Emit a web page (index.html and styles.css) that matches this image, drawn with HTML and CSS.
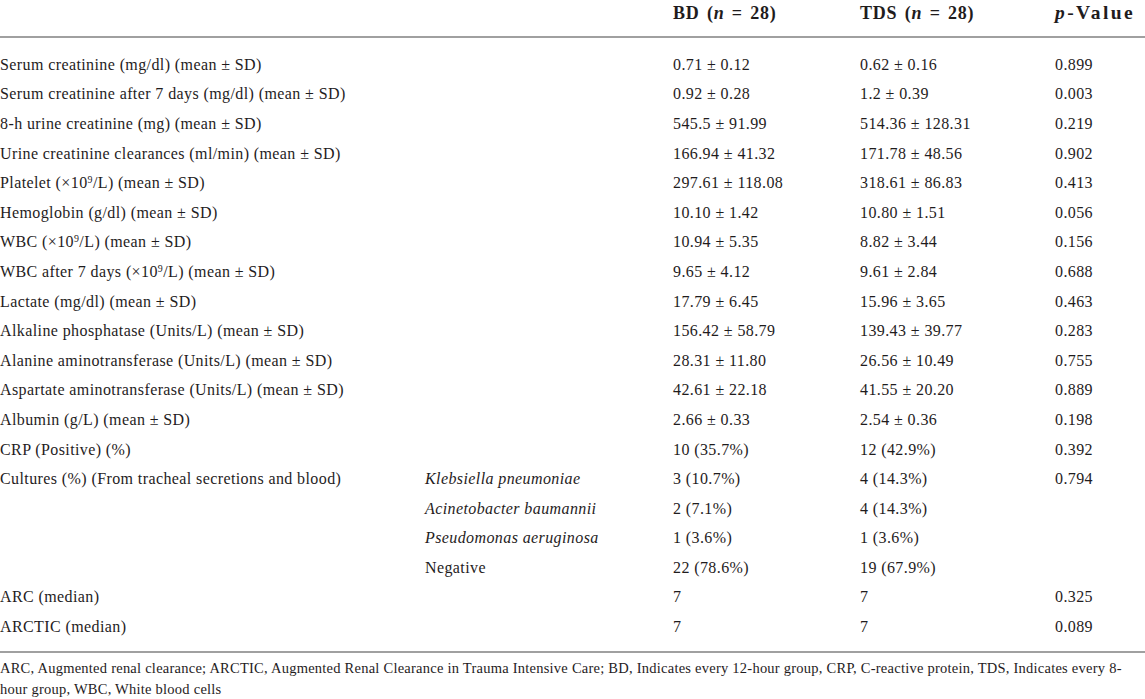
FILE: index.html
```html
<!DOCTYPE html>
<html>
<head>
<meta charset="utf-8">
<link rel="stylesheet" href="styles.css">
</head>
<body>
<div class="page">
<table class="data">
  <colgroup>
    <col class="c1"><col class="c2"><col class="c3"><col class="c4"><col class="c5">
  </colgroup>
  <thead>
    <tr>
      <th></th><th></th>
      <th>BD (<i>n</i> = 28)</th>
      <th>TDS (<i>n</i> = 28)</th>
      <th class="pval"><i>p</i>-Value</th>
    </tr>
  </thead>
  <tbody>
    <tr class="first"><td>Serum creatinine (mg/dl) (mean ± SD)</td><td></td><td>0.71 ± 0.12</td><td>0.62 ± 0.16</td><td>0.899</td></tr>
    <tr><td>Serum creatinine after 7 days (mg/dl) (mean ± SD)</td><td></td><td>0.92 ± 0.28</td><td>1.2 ± 0.39</td><td>0.003</td></tr>
    <tr><td>8-h urine creatinine (mg) (mean ± SD)</td><td></td><td>545.5 ± 91.99</td><td>514.36 ± 128.31</td><td>0.219</td></tr>
    <tr><td>Urine creatinine clearances (ml/min) (mean ± SD)</td><td></td><td>166.94 ± 41.32</td><td>171.78 ± 48.56</td><td>0.902</td></tr>
    <tr><td>Platelet (×10<sup>9</sup>/L) (mean ± SD)</td><td></td><td>297.61 ± 118.08</td><td>318.61 ± 86.83</td><td>0.413</td></tr>
    <tr><td>Hemoglobin (g/dl) (mean ± SD)</td><td></td><td>10.10 ± 1.42</td><td>10.80 ± 1.51</td><td>0.056</td></tr>
    <tr><td>WBC (×10<sup>9</sup>/L) (mean ± SD)</td><td></td><td>10.94 ± 5.35</td><td>8.82 ± 3.44</td><td>0.156</td></tr>
    <tr><td>WBC after 7 days (×10<sup>9</sup>/L) (mean ± SD)</td><td></td><td>9.65 ± 4.12</td><td>9.61 ± 2.84</td><td>0.688</td></tr>
    <tr><td>Lactate (mg/dl) (mean ± SD)</td><td></td><td>17.79 ± 6.45</td><td>15.96 ± 3.65</td><td>0.463</td></tr>
    <tr><td>Alkaline phosphatase (Units/L) (mean ± SD)</td><td></td><td>156.42 ± 58.79</td><td>139.43 ± 39.77</td><td>0.283</td></tr>
    <tr><td>Alanine aminotransferase (Units/L) (mean ± SD)</td><td></td><td>28.31 ± 11.80</td><td>26.56 ± 10.49</td><td>0.755</td></tr>
    <tr><td>Aspartate aminotransferase (Units/L) (mean ± SD)</td><td></td><td>42.61 ± 22.18</td><td>41.55 ± 20.20</td><td>0.889</td></tr>
    <tr><td>Albumin (g/L) (mean ± SD)</td><td></td><td>2.66 ± 0.33</td><td>2.54 ± 0.36</td><td>0.198</td></tr>
    <tr><td>CRP (Positive) (%)</td><td></td><td>10 (35.7%)</td><td>12 (42.9%)</td><td>0.392</td></tr>
    <tr><td>Cultures (%) (From tracheal secretions and blood)</td><td><i>Klebsiella pneumoniae</i></td><td>3 (10.7%)</td><td>4 (14.3%)</td><td>0.794</td></tr>
    <tr><td></td><td><i>Acinetobacter baumannii</i></td><td>2 (7.1%)</td><td>4 (14.3%)</td><td></td></tr>
    <tr><td></td><td><i>Pseudomonas aeruginosa</i></td><td>1 (3.6%)</td><td>1 (3.6%)</td><td></td></tr>
    <tr><td></td><td>Negative</td><td>22 (78.6%)</td><td>19 (67.9%)</td><td></td></tr>
    <tr><td>ARC (median)</td><td></td><td>7</td><td>7</td><td>0.325</td></tr>
    <tr class="last"><td>ARCTIC (median)</td><td></td><td>7</td><td>7</td><td>0.089</td></tr>
  </tbody>
</table>
<p class="foot">ARC, Augmented renal clearance; ARCTIC, Augmented Renal Clearance in Trauma Intensive Care; BD, Indicates every 12-hour group, CRP, C-reactive protein, TDS, Indicates every 8-<br>hour group, WBC, White blood cells</p>
</div>
</body>
</html>
```
FILE: styles.css
```css
html, body {
  margin: 0;
  padding: 0;
  background: #ffffff;
}
.page {
  width: 1145px;
  font-family: "Liberation Serif", "Times New Roman", serif;
  color: #1f1c1d;
}
.data {
  width: 1145px;
  border-collapse: collapse;
  table-layout: fixed;
  font-size: 16px;
  letter-spacing: 0.4px;
}
.c1 { width: 425px; }
.c2 { width: 248px; }
.c3 { width: 187px; }
.c4 { width: 195px; }
.c5 { width: 90px; }
.data th {
  text-align: left;
  font-size: 18px;
  font-weight: bold;
  letter-spacing: 0.8px;
  word-spacing: 2px;
  padding: 0;
  height: 36px;
  vertical-align: top;
  line-height: 26px;
  border-bottom: 2px solid #a0a0a0;
  white-space: nowrap;
}
.data th.pval {
  font-size: 19.5px;
  letter-spacing: 2.4px;
}
.data td {
  padding: 0;
  height: 29.6px;
  line-height: 20px;
  vertical-align: middle;
  white-space: nowrap;
}
.data tr.first td {
  padding-top: 12px;
}
.data tr.last td {
  padding-bottom: 9px;
}
.data tbody tr.last td {
  border-bottom: 2px solid #a0a0a0;
}
sup {
  font-size: 0.62em;
  line-height: 0;
  vertical-align: 0.55em;
}
.foot {
  margin: 0;
  padding-top: 5px;
  font-size: 14.5px;
  line-height: 21px;
  letter-spacing: 0.24px;
}
```
